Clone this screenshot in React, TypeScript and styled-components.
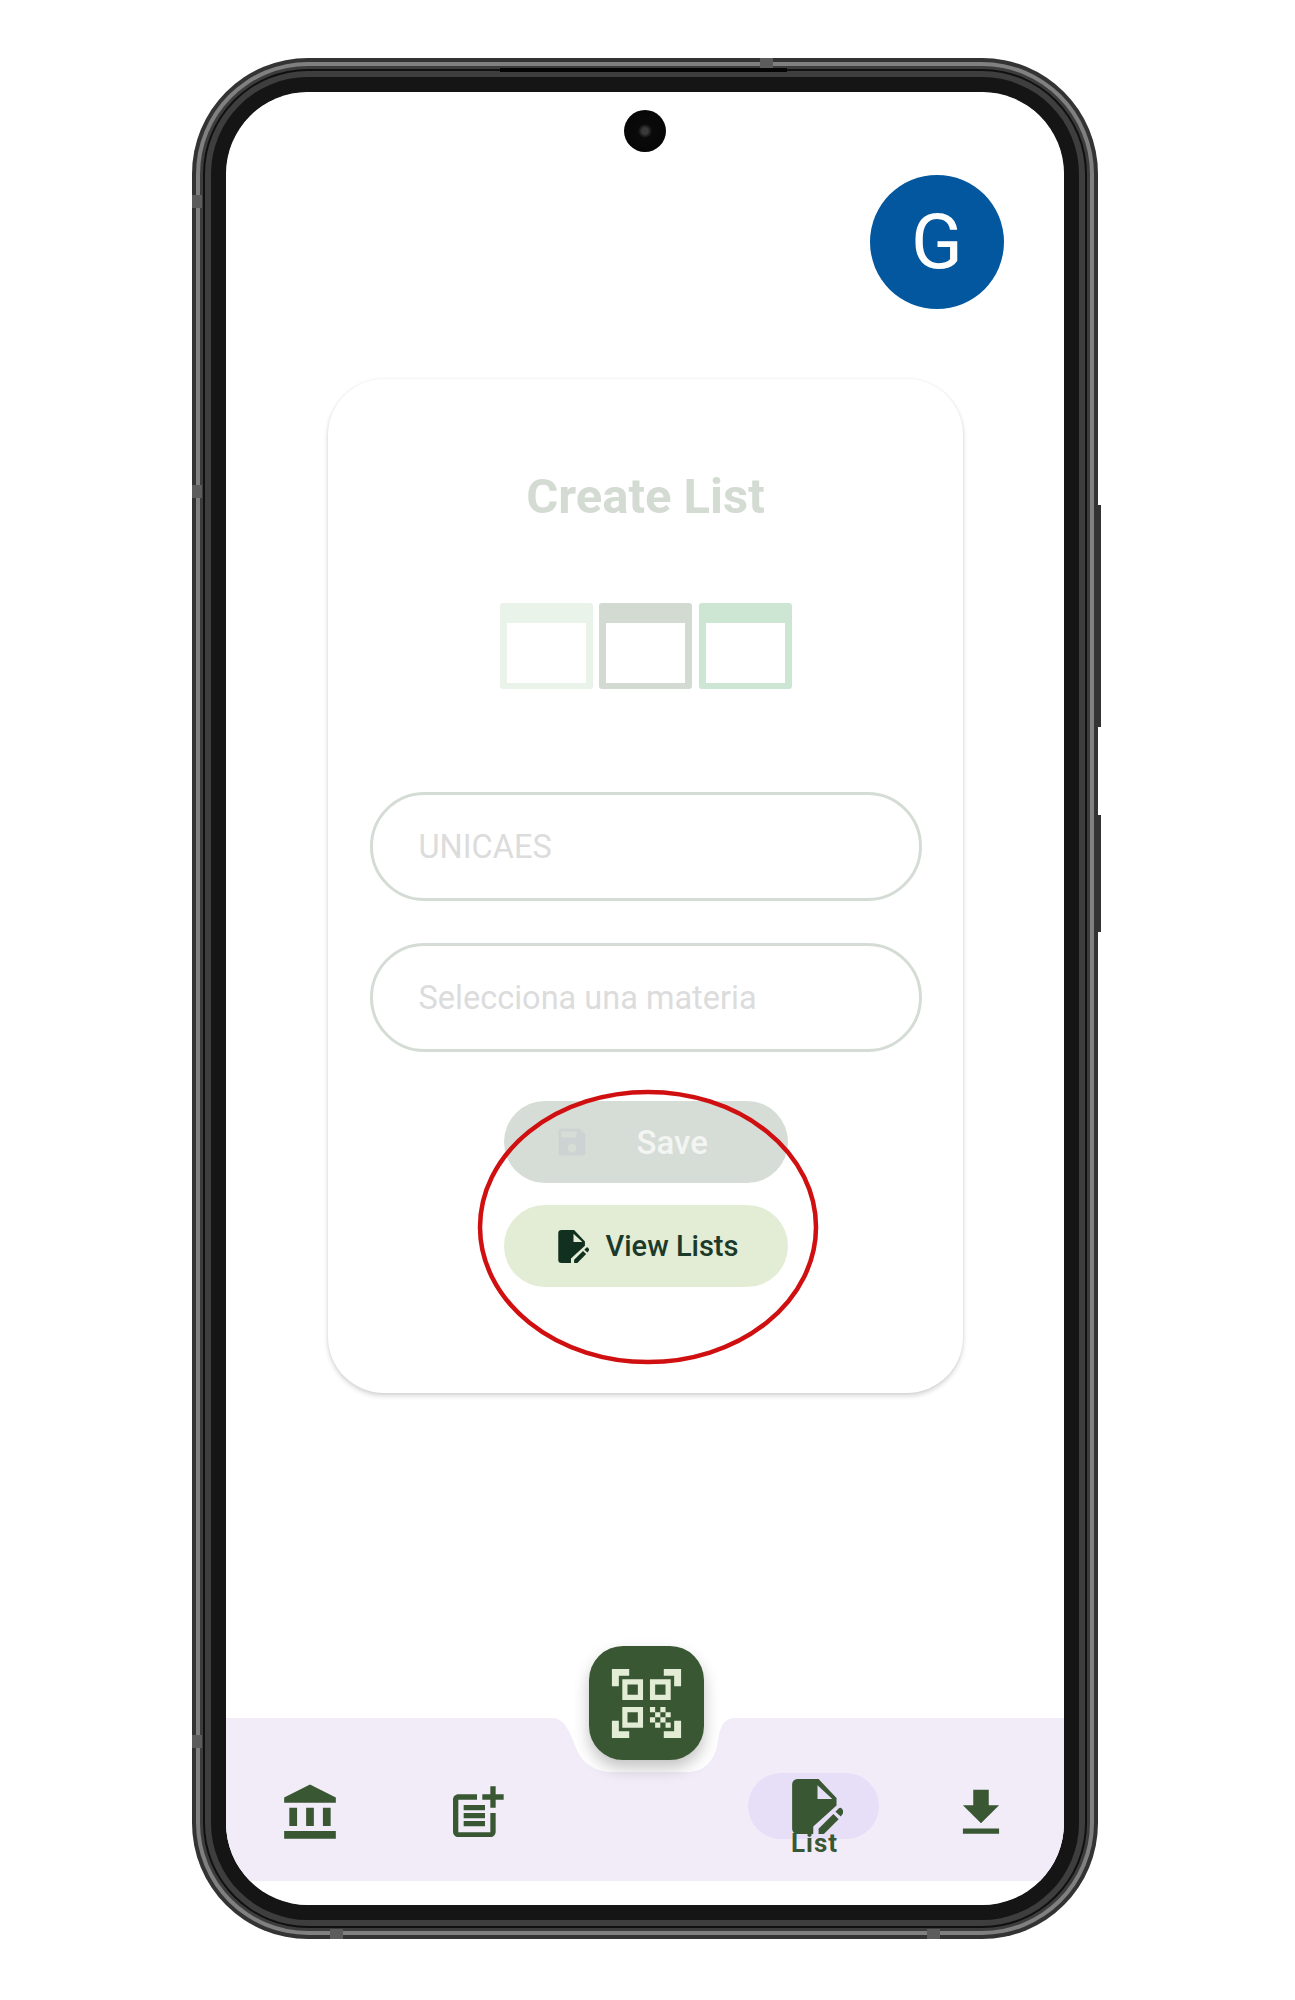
import React from 'react';
import styled, { createGlobalStyle } from 'styled-components';
import { MdAccountBalance, MdPostAdd, MdQrCodeScanner, MdFileDownload, MdSave } from 'react-icons/md';

const GlobalStyle = createGlobalStyle`
    html, body {
        margin: 0;
        background: #fff;
    }
    body {
        font-family: Roboto, "Noto Sans", sans-serif;
    }
`;

const Page = styled.div`
    width: 1295px;
    height: 2000px;
    padding: 92px 0 0 226px;
    box-sizing: border-box;
    overflow: hidden;
`;

const Phone = styled.div`
    position: relative;
    width: 838px;
    height: 1813px;
    border-radius: 82px;
    box-shadow:
        0 0 0 15px #151515,
        0 0 0 21px #3e3e3e,
        0 0 0 23px #101010,
        0 0 0 26px #3c3c3c,
        0 0 0 30px #808080,
        0 0 0 34px #333;
`;

const SideButton = styled.div<{ $top: number; $height: number }>`
    position: absolute;
    right: -37px;
    top: ${({ $top }) => $top}px;
    width: 3px;
    height: ${({ $height }) => $height}px;
    background: #333;
`;

const Speaker = styled.div`
    position: absolute;
    top: -24px;
    left: 274px;
    width: 287px;
    height: 4px;
    background: #050505;
`;

const Band = styled.div<{ $side: 'top' | 'left' | 'right' | 'bottom'; $at: number }>`
    position: absolute;
    background: #5c5c5c;
    ${({ $side, $at }) =>
        $side === 'top' || $side === 'bottom'
            ? `left: ${$at}px; ${$side}: -34px; width: 13px; height: 10px;`
            : `top: ${$at}px; ${$side}: -34px; width: 10px; height: 13px;`}
`;

const Screen = styled.div`
    position: relative;
    width: 100%;
    height: 100%;
    background: #fff;
    border-radius: 82px;
    overflow: hidden;
    display: flex;
    flex-direction: column;
`;

const Camera = styled.div`
    position: absolute;
    top: 18px;
    left: 398px;
    width: 42px;
    height: 42px;
    border-radius: 50%;
    background: radial-gradient(circle at 50% 50%, #3a3a3a 0 3px, #0a0a0a 7px, #050505 100%);
`;

const TopRow = styled.div`
    display: flex;
    justify-content: flex-end;
    padding: 83px 60px 0 0;
`;

const Avatar = styled.div`
    width: 134px;
    height: 134px;
    border-radius: 50%;
    background: #02579e;
    color: #fff;
    font-size: 76px;
    font-weight: 400;
    display: flex;
    align-items: center;
    justify-content: center;
`;

const Card = styled.div`
    position: relative;
    box-sizing: border-box;
    width: 635px;
    height: 1014px;
    margin: 70px 0 0 102px;
    padding: 90px 41px 0;
    border-radius: 56px;
    background: #fff;
    box-shadow: 0 3px 5px rgba(0, 0, 0, 0.16), 0 0 3px rgba(0, 0, 0, 0.07);
    display: flex;
    flex-direction: column;
    align-items: center;
`;

const Title = styled.h1`
    margin: 0;
    font-size: 49px;
    line-height: 56px;
    font-weight: 700;
    color: #d3dbd3;
`;

const Swatches = styled.div`
    display: flex;
    gap: 6.5px;
    margin-top: 78px;
`;

const Swatch = styled.div<{ $color: string }>`
    box-sizing: border-box;
    width: 93px;
    height: 86px;
    border: solid ${({ $color }) => $color};
    border-width: 20px 7px 6px;
    border-radius: 3px;
`;

const Field = styled.div<{ $first?: boolean }>`
    box-sizing: border-box;
    width: 552px;
    height: 109px;
    margin-top: ${({ $first }) => ($first ? 103 : 42)}px;
    padding-left: 46px;
    border: 3px solid #d5dcd5;
    border-radius: 55px;
    color: #dcdcdc;
    font-size: 32.5px;
    font-weight: 400;
    display: flex;
    align-items: center;
`;

const ActionButton = styled.div<{ $variant: 'save' | 'view' }>`
    box-sizing: border-box;
    width: 284px;
    height: 82px;
    border-radius: 41px;
    display: flex;
    align-items: center;
    font-size: ${({ $variant }) => ($variant === 'save' ? 33 : 29)}px;
    font-weight: 500;
    margin-top: ${({ $variant }) => ($variant === 'save' ? 49 : 22)}px;
    padding-left: ${({ $variant }) => ($variant === 'save' ? 50 : 54)}px;
    gap: ${({ $variant }) => ($variant === 'save' ? 47 : 17)}px;
    background: ${({ $variant }) => ($variant === 'save' ? '#d6dcd6' : '#e3edd5')};
    color: ${({ $variant }) => ($variant === 'save' ? '#f3f5f3' : '#1b3a29')};

    svg {
        flex: none;
        color: ${({ $variant }) => ($variant === 'save' ? '#cdd3d2' : '#12301f')};
    }
`;

const Highlight = styled.svg`
    position: absolute;
    left: 149px;
    top: 710px;
`;

const Nav = styled.nav`
    position: relative;
    margin-top: auto;
    margin-bottom: 24px;
    height: 163px;
    background: #f2ecf8;
    display: grid;
    grid-template-columns: repeat(5, 1fr);
    padding-top: 55px;
    box-sizing: border-box;
`;

const NavNotch = styled.svg`
    position: absolute;
    left: 0;
    top: 0;
`;

const Fab = styled.div`
    position: absolute;
    left: 363px;
    top: -72px;
    width: 115px;
    height: 114px;
    border-radius: 34px;
    background: #3a5734;
    color: #e3edd5;
    box-shadow: 0 8px 16px rgba(0, 0, 0, 0.24);
    display: flex;
    align-items: center;
    justify-content: center;
`;

const NavItem = styled.div<{ $column: number; $shift?: number }>`
    grid-column: ${({ $column }) => $column};
    padding-left: ${({ $shift }) => $shift ?? 0}px;
    display: flex;
    flex-direction: column;
    align-items: center;
    color: #3a5734;
`;

const IconSlot = styled.div<{ $active?: boolean }>`
    box-sizing: border-box;
    width: 131px;
    height: 66px;
    margin-top: ${({ $active }) => ($active ? 0 : 7)}px;
    padding-left: ${({ $active }) => ($active ? 7 : 0)}px;
    border-radius: 33px;
    background: ${({ $active }) => ($active ? '#e7dff7' : 'transparent')};
    display: flex;
    align-items: center;
    justify-content: center;
`;

const NavLabel = styled.span`
    margin: -7px 0 0 2px;
    font-size: 26px;
    letter-spacing: 1px;
    line-height: 22px;
    font-weight: 700;
    position: relative;
`;

function EditDocumentIcon({ width, height }: { width: number; height: number }) {
    return (
        <svg width={width} height={height} viewBox="0 0 48 52" fill="currentColor">
            <path
                fillRule="evenodd"
                d="M5 0H25L42 18V25L20 45V52H5a5 5 0 0 1-5-5V5a5 5 0 0 1 5-5ZM24 6V19H38Z"
            />
            <path d="M25 52V47L39 33L44 38L30 52Z" />
            <path d="M41 31L44 28a2 2 0 0 1 3 0L48 29.5a2 2 0 0 1 0 3L46 35.5Z" />
        </svg>
    );
}

export default function App() {
    return (
        <Page>
            <GlobalStyle />
            <Phone>
                <SideButton $top={413} $height={222} />
                <SideButton $top={723} $height={117} />
                <Speaker />
                <Band $side="top" $at={534} />
                <Band $side="left" $at={103} />
                <Band $side="left" $at={393} />
                <Band $side="left" $at={1643} />
                <Band $side="bottom" $at={104} />
                <Band $side="bottom" $at={701} />
                <Screen>
                    <Camera />
                    <TopRow>
                        <Avatar>G</Avatar>
                    </TopRow>
                    <Card>
                        <Title>Create List</Title>
                        <Swatches>
                            <Swatch $color="#e9f3ea" />
                            <Swatch $color="#d3dad2" />
                            <Swatch $color="#cde6d3" />
                        </Swatches>
                        <Field $first>UNICAES</Field>
                        <Field>Selecciona una materia</Field>
                        <ActionButton $variant="save">
                            <MdSave size={36} />
                            Save
                        </ActionButton>
                        <ActionButton $variant="view">
                            <EditDocumentIcon width={31} height={33} />
                            View Lists
                        </ActionButton>
                        <Highlight width="342" height="276" viewBox="0 0 342 276" fill="none">
                            <ellipse cx="171" cy="138" rx="168" ry="135" stroke="#d01010" strokeWidth="4.5" />
                        </Highlight>
                    </Card>
                    <Nav>
                        <NavNotch width="838" height="60" viewBox="0 0 838 60">
                            <path
                                d="M322 0H327C338 0 344 14 350 30C356 46 370 54 386 54H462C480 54 490 40 492 22C494 8 498 0 510 0Z"
                                fill="#fff"
                            />
                        </NavNotch>
                        <Fab>
                            <MdQrCodeScanner size={83} />
                        </Fab>
                        <NavItem $column={1}>
                            <IconSlot>
                                <MdAccountBalance size={62} />
                            </IconSlot>
                        </NavItem>
                        <NavItem $column={2}>
                            <IconSlot>
                                <MdPostAdd size={64} />
                            </IconSlot>
                        </NavItem>
                        <NavItem $column={4} $shift={2}>
                            <IconSlot $active>
                                <EditDocumentIcon width={51} height={55} />
                            </IconSlot>
                            <NavLabel>List</NavLabel>
                        </NavItem>
                        <NavItem $column={5} $shift={2}>
                            <IconSlot>
                                <MdFileDownload size={62} />
                            </IconSlot>
                        </NavItem>
                    </Nav>
                </Screen>
            </Phone>
        </Page>
    );
}
